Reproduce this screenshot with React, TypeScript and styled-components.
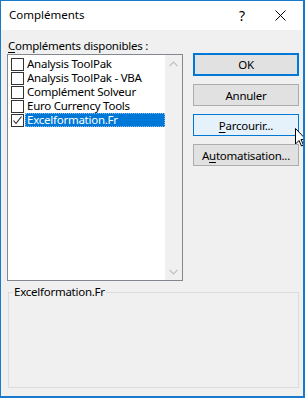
import React from 'react';
import styled, { createGlobalStyle } from 'styled-components';

const GlobalStyle = createGlobalStyle`
  html, body {
    margin: 0;
    padding: 0;
    background: #f0f0f0;
  }
  body {
    font-family: "Noto Sans", "Liberation Sans", sans-serif;
    font-size: 11.5px;
    color: #000;
  }
`;

const Window = styled.div`
  position: relative;
  box-sizing: border-box;
  width: 305px;
  height: 398px;
  border: 1px solid #1979ca;
  border-right-width: 2px;
  border-bottom-width: 2px;
  display: flex;
  flex-direction: column;
  background: #f0f0f0;
  overflow: hidden;
`;

const TitleBar = styled.div`
  height: 29px;
  flex: none;
  background: #fff;
  display: flex;
  align-items: center;
  padding-left: 8px;
`;

const Title = styled.div`
  flex: 1;
  font-size: 11.5px;
  line-height: 16px;
  margin-top: -2px;
`;

const TitleButton = styled.div<{ $w: number }>`
  width: ${(p) => p.$w}px;
  height: 29px;
  display: flex;
  align-items: center;
  justify-content: center;
  font-size: 14px;
  color: #000;
`;

const Body = styled.div`
  flex: 1;
  padding: 8px 0 0 6px;
  display: flex;
  flex-direction: column;
`;

const TopRow = styled.div`
  display: flex;
`;

const LeftCol = styled.div`
  display: flex;
  flex-direction: column;
`;

const Label = styled.div`
  height: 16px;
  line-height: 16px;
  letter-spacing: -0.25px;
  padding-left: 1px;
`;

const Accel = styled.span`
  text-decoration: underline;
  text-underline-offset: 2px;
`;

const ListBox = styled.div`
  box-sizing: border-box;
  width: 176px;
  height: 227px;
  border: 1px solid #828790;
  background: #fff;
  display: flex;
`;

const Items = styled.div`
  flex: 1;
  padding: 2px 0 0 3px;
  display: flex;
  flex-direction: column;
`;

const Row = styled.div`
  display: flex;
  align-items: center;
  height: 14px;
`;

const Box = styled.div`
  box-sizing: border-box;
  width: 13px;
  height: 13px;
  border: 1px solid #333;
  background: #fff;
  flex: none;
  position: relative;
`;

const ItemText = styled.div<{ $sel?: boolean }>`
  box-sizing: border-box;
  margin-left: 1px;
  height: 14px;
  line-height: 14px;
  padding: 0 2px;
  letter-spacing: -0.25px;
  white-space: nowrap;
  width: ${(p) => (p.$sel ? '140px' : 'auto')};
  background: ${(p) => (p.$sel ? '#0078d7' : 'transparent')};
  color: ${(p) => (p.$sel ? '#fff' : '#000')};
  outline: ${(p) => (p.$sel ? '1px dotted #8fb8e6' : 'none')};
  outline-offset: -1px;
`;

const ScrollBar = styled.div`
  width: 17px;
  background: #f0f0f0;
  display: flex;
  flex-direction: column;
  justify-content: space-between;
  align-items: center;
  padding: 6px 0 5px;
`;

const RightCol = styled.div`
  margin: 15px 0 0 10px;
  display: flex;
  flex-direction: column;
  gap: 8px;
`;

const Button = styled.div<{ $default?: boolean; $hover?: boolean }>`
  box-sizing: border-box;
  width: 106px;
  height: ${(p) => (p.$default ? '23px' : '22px')};
  display: flex;
  align-items: center;
  justify-content: center;
  letter-spacing: -0.25px;
  background: ${(p) => (p.$hover ? '#e5f1fb' : '#e1e1e1')};
  border: ${(p) =>
    p.$default ? '2px solid #0078d7' : p.$hover ? '1px solid #0078d7' : '1px solid #adadad'};
`;

const Group = styled.fieldset`
  box-sizing: border-box;
  margin: 3px 0 0 1px;
  padding: 0;
  width: 291px;
  height: 104px;
  border: 1px solid #dcdcdc;
  min-width: 0;
`;

const Legend = styled.legend`
  margin-left: 4px;
  padding: 0 1px;
  line-height: 16px;
  letter-spacing: -0.25px;
`;

const Cursor = styled.svg`
  position: absolute;
  left: 294px;
  top: 127px;
`;

const Chevron: React.FC<{ up?: boolean }> = ({ up }) => (
  <svg width="9" height="6" viewBox="0 0 9 6">
    <path
      d={up ? 'M0.5 5 L4.5 1 L8.5 5' : 'M0.5 1 L4.5 5 L8.5 1'}
      fill="none"
      stroke="#c2c2c2"
      strokeWidth="1.2"
    />
  </svg>
);

const addins = [
  { name: 'Analysis ToolPak', checked: false },
  { name: 'Analysis ToolPak - VBA', checked: false },
  { name: 'Complément Solveur', checked: false },
  { name: 'Euro Currency Tools', checked: false },
  { name: 'Excelformation.Fr', checked: true },
];

const App: React.FC = () => {
  return (
    <>
      <GlobalStyle />
      <Window>
        <TitleBar>
          <Title>Compléments</Title>
          <TitleButton $w={30}>?</TitleButton>
          <TitleButton $w={46}>
            <svg width="11" height="11" viewBox="0 0 11 11">
              <path d="M0.5 0.5 L10.5 10.5 M10.5 0.5 L0.5 10.5" stroke="#000" strokeWidth="1" />
            </svg>
          </TitleButton>
        </TitleBar>
        <Body>
          <TopRow>
            <LeftCol>
              <Label>
                <Accel>C</Accel>ompléments disponibles :
              </Label>
              <ListBox>
                <Items>
                  {addins.map((a) => (
                    <Row key={a.name}>
                      <Box>
                        {a.checked && (
                          <svg width="11" height="11" viewBox="0 0 11 11" style={{ position: 'absolute', left: 0, top: 0 }}>
                            <path d="M1.5 5.5 L4 8.5 L9.5 1.5" fill="none" stroke="#222" strokeWidth="1.1" />
                          </svg>
                        )}
                      </Box>
                      <ItemText $sel={a.checked}>{a.name}</ItemText>
                    </Row>
                  ))}
                </Items>
                <ScrollBar>
                  <Chevron up />
                  <Chevron />
                </ScrollBar>
              </ListBox>
            </LeftCol>
            <RightCol>
              <Button $default>OK</Button>
              <Button>Annuler</Button>
              <Button $hover>
                <span>
                  <Accel>P</Accel>arcourir...
                </span>
              </Button>
              <Button>
                <span>
                  A<Accel>u</Accel>tomatisation...
                </span>
              </Button>
            </RightCol>
          </TopRow>
          <Group>
            <Legend>Excelformation.Fr</Legend>
          </Group>
        </Body>
        <Cursor width="12" height="19" viewBox="0 0 12 19">
          <path
            d="M0.5 0.5 L0.5 16 L4 12.5 L6.5 18 L8.5 17 L6 11.5 L11 11.5 Z"
            fill="#fff"
            stroke="#000"
            strokeWidth="1"
            strokeLinejoin="round"
          />
        </Cursor>
      </Window>
    </>
  );
};

export default App;
